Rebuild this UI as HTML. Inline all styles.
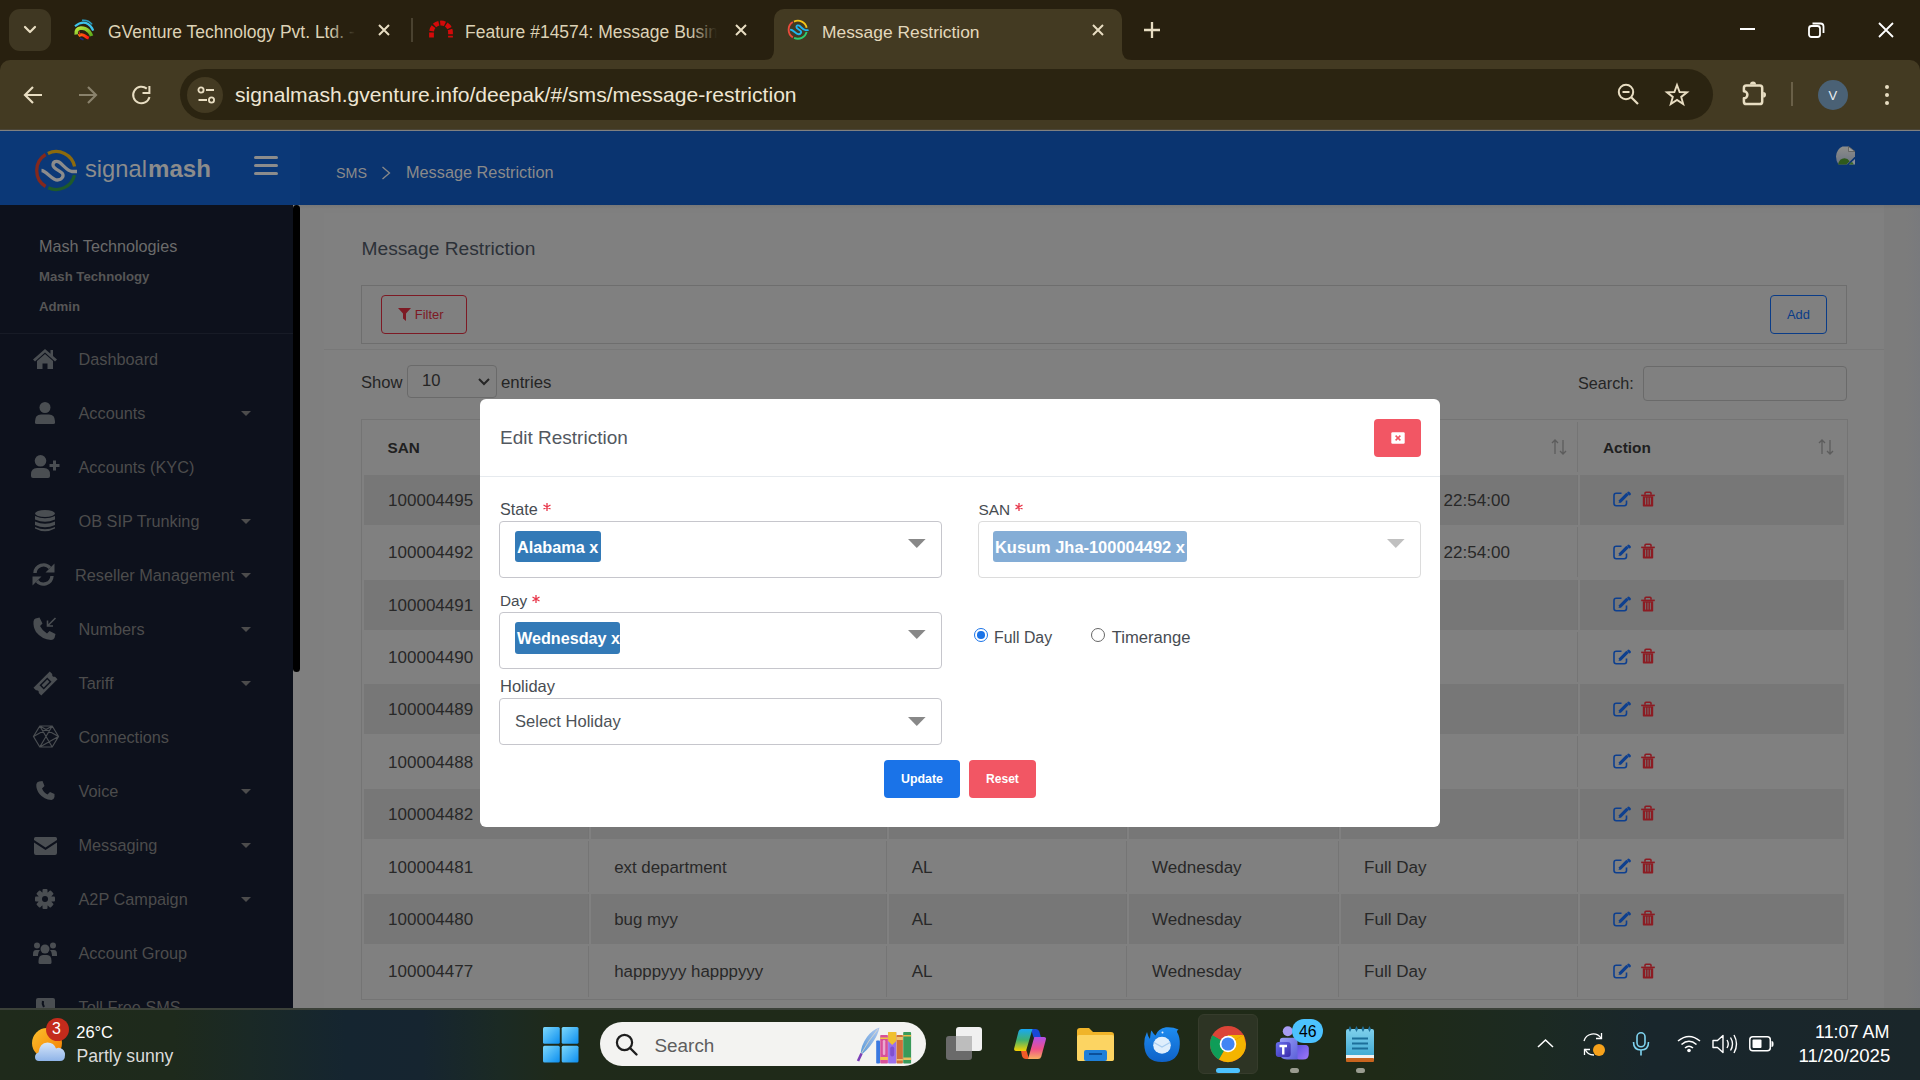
<!DOCTYPE html>
<html><head><meta charset="utf-8">
<style>
*{margin:0;padding:0;box-sizing:border-box}
html,body{width:1920px;height:1080px;overflow:hidden;background:#808080;font-family:"Liberation Sans",sans-serif}
.a{position:absolute}
.t{position:absolute;white-space:nowrap;line-height:1}
svg{position:absolute;overflow:visible}
</style></head><body>
<div class="a" style="left:0px;top:0px;width:1920px;height:72px;background:#28200f;"></div>
<div class="a" style="left:9px;top:9px;width:42px;height:42px;background:#3f3722;border-radius:11px"></div>
<svg style="left:24px;top:26px;" width="12" height="8" viewBox="0 0 12 8"><path d="M1 1 L6 6 L11 1" fill="none" stroke="#e8ddc2" stroke-width="2.2" stroke-linecap="round" stroke-linejoin="round"/></svg>
<svg style="left:70px;top:14px;" width="30" height="30" viewBox="0 0 30 30"><defs><linearGradient id="gvr" x1="0" y1="0" x2="1" y2="0"><stop offset="0" stop-color="#ff7a10"/><stop offset="1" stop-color="#ff1010"/></linearGradient>
<linearGradient id="gvg" x1="0" y1="0" x2="1" y2="1"><stop offset="0" stop-color="#b8e640"/><stop offset="1" stop-color="#5aa818"/></linearGradient></defs>
<path d="M12 6.3 Q18 5.5 22.2 10.4" stroke="#2a9cc0" stroke-width="1.4" fill="none"/>
<path d="M5 12.3 Q12 6.5 18 10 Q21.5 12 23.2 16.6" stroke="#3ec4ec" stroke-width="2.1" fill="none"/>
<path d="M6.2 20.5 Q5.5 14.5 11 14 Q16 14 19 17.5 Q21 20 21.5 22" stroke="url(#gvg)" stroke-width="3.6" fill="none"/>
<path d="M8.5 21.8 Q12 19.5 15 22 Q17 23.5 18.8 24.2" stroke="url(#gvr)" stroke-width="3" fill="none"/>
<path d="M10 24 Q12 25 13.5 25.8" stroke="#1a2a80" stroke-width="1.5" fill="none"/>
<path d="M9 17.5 L10 21" stroke="#c03020" stroke-width="1.2"/></svg>
<div class="t" style="left:108px;top:24.00px;font-size:17.5px;color:#ddd2b6;font-weight:normal;letter-spacing:0px">GVenture Technology Pvt. Ltd. -</div>
<div class="a" style="left:330px;top:16px;width:30px;height:28px;background:linear-gradient(90deg,rgba(40,32,15,0),#28200f 85%);"></div>
<svg style="left:378px;top:24px;" width="12" height="12" viewBox="0 0 12 12"><path d="M1 1L11 11M11 1L1 11" stroke="#e8ddc2" stroke-width="2"/></svg>
<div class="a" style="left:411px;top:18px;width:2px;height:24px;background:#4a4230;"></div>
<svg style="left:420px;top:10px;" width="40" height="40" viewBox="0 0 40 40"><path d="M11.5 27.4 V22.5 A9.5 9.5 0 0 1 30.5 22.5 V27.4" fill="none" stroke="#d40a0a" stroke-width="4.8" stroke-dasharray="4.9 1.4"/></svg>
<div class="t" style="left:465px;top:24.00px;font-size:17.5px;color:#ddd2b6;font-weight:normal;">Feature #14574: Message Busin</div>
<div class="a" style="left:690px;top:16px;width:30px;height:28px;background:linear-gradient(90deg,rgba(40,32,15,0),#28200f 90%);"></div>
<svg style="left:735px;top:24px;" width="12" height="12" viewBox="0 0 12 12"><path d="M1 1L11 11M11 1L1 11" stroke="#e8ddc2" stroke-width="2"/></svg>
<div class="a" style="left:774px;top:9px;width:348px;height:52px;background:#433a22;border-radius:10px 10px 0 0"></div>
<svg style="left:764px;top:50px" width="10" height="10"><path d="M0 10 Q10 10 10 0 L10 10Z" fill="#433a22"/></svg>
<svg style="left:1122px;top:50px" width="10" height="10"><path d="M10 10 Q0 10 0 0 L0 10Z" fill="#433a22"/></svg>
<svg style="left:0;top:0" width="1" height="1"><g transform="translate(785.07,17.54) scale(0.477)">
<path d="M18.6 8.4 A18.85 18.85 0 0 1 45.3 21.5" stroke="#f5c518" stroke-width="3.9" fill="none"/>
<path d="M45.2 30.1 A18.85 18.85 0 0 1 18.9 42.7" stroke="#2ecc71" stroke-width="3.9" fill="none"/>
<path d="M16.3 41.5 A18.85 18.85 0 0 1 16.3 9.5" stroke="#ea4b3c" stroke-width="3.9" fill="none"/>
<path d="M12.2 25.5 C16.7 25.5 22.7 35 28.2 35 C32.7 35 34.7 31 33.2 28.5 C31.7 26 23.7 24 23.7 20 C23.7 16.5 27.2 15.5 29.7 17 C33.7 19.5 37.7 26 42.7 26.5 L47.7 26.5" stroke="#1eb6f0" stroke-width="3.9" fill="none" stroke-linecap="round" stroke-linejoin="round"/></g></svg>
<div class="t" style="left:822px;top:24.00px;font-size:17.4px;color:#e3d8bc;font-weight:normal;">Message Restriction</div>
<svg style="left:1092px;top:24px;" width="12" height="12" viewBox="0 0 12 12"><path d="M1 1L11 11M11 1L1 11" stroke="#e8ddc2" stroke-width="2"/></svg>
<svg style="left:1144px;top:22px;" width="16" height="16" viewBox="0 0 16 16"><path d="M8 0V16M0 8H16" stroke="#e8ddc2" stroke-width="2.3"/></svg>
<div class="a" style="left:1740px;top:28px;width:15px;height:2px;background:#ffffff;"></div>
<svg style="left:1808px;top:22px;" width="17" height="16" viewBox="0 0 17 16"><rect x="1" y="4" width="11" height="11" rx="2.5" fill="none" stroke="#fff" stroke-width="1.8"/><path d="M4.5 1.5 H12.5 Q15.5 1.5 15.5 4.5 V11" fill="none" stroke="#fff" stroke-width="1.8"/></svg>
<svg style="left:1878px;top:22px;" width="16" height="16" viewBox="0 0 16 16"><path d="M1 1L15 15M15 1L1 15" stroke="#fff" stroke-width="1.8"/></svg>
<div class="a" style="left:0px;top:60px;width:1920px;height:70px;background:#433a22;border-radius:10px 10px 0 0"></div>
<div class="a" style="left:0px;top:129px;width:1920px;height:1px;background:#4a4436;"></div>
<svg style="left:24px;top:86px;" width="19" height="18" viewBox="0 0 19 18"><path d="M9 1 L1 9 L9 17 M1 9 H18" fill="none" stroke="#e8ddc2" stroke-width="2.2" stroke-linejoin="miter"/></svg>
<svg style="left:78px;top:86px;" width="19" height="18" viewBox="0 0 19 18"><path d="M10 1 L18 9 L10 17 M18 9 H1" fill="none" stroke="#8a826c" stroke-width="2.2"/></svg>
<svg style="left:131px;top:85px;" width="20" height="20" viewBox="0 0 20 20"><path d="M15.8 3.64 A8.3 8.3 0 1 0 18.5 12.1" fill="none" stroke="#e8ddc2" stroke-width="2"/><path d="M11.5 8 H18.4 V1" fill="none" stroke="#e8ddc2" stroke-width="2"/></svg>
<div class="a" style="left:180px;top:69px;width:1533px;height:51px;background:#2b2411;border-radius:26px"></div>
<div class="a" style="left:187px;top:77px;width:36px;height:36px;background:#433a22;border-radius:50%"></div>
<svg style="left:196.8px;top:86px;" width="20" height="18" viewBox="0 0 20 18"><circle cx="4" cy="4" r="2.6" fill="none" stroke="#e8ddc2" stroke-width="1.8"/><path d="M9 4H17" stroke="#e8ddc2" stroke-width="2"/><circle cx="14.5" cy="14" r="2.6" fill="none" stroke="#e8ddc2" stroke-width="1.8"/><path d="M1.5 14H10" stroke="#e8ddc2" stroke-width="2"/></svg>
<div class="t" style="left:235px;top:84.00px;font-size:21.1px;color:#eee6d4;font-weight:normal;">signalmash.gventure.info/deepak/#/sms/message-restriction</div>
<svg style="left:1617px;top:83px;" width="24" height="24" viewBox="0 0 24 24"><circle cx="9" cy="9" r="7.2" fill="none" stroke="#e8ddc2" stroke-width="2"/><path d="M5.5 9H12.5" stroke="#e8ddc2" stroke-width="2"/><path d="M14.2 14.2 L21 21" stroke="#e8ddc2" stroke-width="2.2"/></svg>
<svg style="left:1665px;top:83px;" width="24" height="24" viewBox="0 0 24 24"><path d="M12 2 L14.6 9 L22 9.3 L16.2 13.9 L18.2 21 L12 16.9 L5.8 21 L7.8 13.9 L2 9.3 L9.4 9 Z" fill="none" stroke="#e8ddc2" stroke-width="1.9" stroke-linejoin="miter"/></svg>
<svg style="left:1741px;top:81px;" width="27" height="26" viewBox="0 0 27 26"><path d="M2.9 7 Q2.9 4.6 5.3 4.6 H18.8 Q21.2 4.6 21.2 7 V20.7 Q21.2 23.1 18.8 23.1 H5.3 Q2.9 23.1 2.9 20.7 V17.3 A3.5 3.5 0 0 0 2.9 10.3 Z" fill="none" stroke="#e8ddc2" stroke-width="2.5" stroke-linejoin="round"/><path d="M9 3.6 A3 3 0 0 1 15 3.6 Z" fill="#e8ddc2"/><path d="M22.2 11 A2.8 2.8 0 0 1 22.2 16.6 Z" fill="#e8ddc2"/></svg>
<div class="a" style="left:1791px;top:82px;width:2px;height:24px;background:#6a6048;"></div>
<div class="a" style="left:1818px;top:80px;width:30px;height:30px;background:#4a6175;border-radius:50%"></div>
<div class="t" style="left:1828.5px;top:89.00px;font-size:13px;color:#e8eef2;font-weight:normal;">V</div>
<div class="a" style="left:1885px;top:84.8px;width:4.4px;height:4.4px;background:#e8ddc2;border-radius:50%"></div>
<div class="a" style="left:1885px;top:92.8px;width:4.4px;height:4.4px;background:#e8ddc2;border-radius:50%"></div>
<div class="a" style="left:1885px;top:100.8px;width:4.4px;height:4.4px;background:#e8ddc2;border-radius:50%"></div>
<div class="a" style="left:0px;top:131px;width:1920px;height:74px;background:#0a3470;"></div>
<div class="a" style="left:0px;top:131px;width:300px;height:74px;background:#0b3877;"></div>
<svg style="left:30px;top:145px;" width="60" height="52" viewBox="0 0 60 52"><path d="M17.9 8.4 A18.85 18.85 0 0 1 44.6 21.5" stroke="#8c6a0e" stroke-width="3.3" fill="none"/>
<path d="M44.5 30.1 A18.85 18.85 0 0 1 18.2 42.7" stroke="#1e5a2a" stroke-width="3.3" fill="none"/>
<path d="M15.6 41.5 A18.85 18.85 0 0 1 15.6 9.5" stroke="#84281c" stroke-width="3.3" fill="none"/>
<path d="M11.5 25.5 C16 25.5 22 35 27.5 35 C32 35 34 31 32.5 28.5 C31 26 23 24 23 20 C23 16.5 26.5 15.5 29 17 C33 19.5 37 26 42 26.5 L47 26.5" stroke="#8c8c8c" stroke-width="3.3" fill="none" stroke-linecap="butt" stroke-linejoin="round"/></svg>
<div class="t" style="left:85px;top:158.00px;font-size:23.7px;color:#8c8c8c;font-weight:normal;">signal</div>
<div class="t" style="left:148px;top:157.00px;font-size:24.1px;color:#8c8c8c;font-weight:bold;">mash</div>
<div class="a" style="left:254px;top:156.1px;width:24px;height:3px;background:#8c8c8c;border-radius:1.5px"></div>
<div class="a" style="left:254px;top:164.1px;width:24px;height:3px;background:#8c8c8c;border-radius:1.5px"></div>
<div class="a" style="left:254px;top:172.1px;width:24px;height:3px;background:#8c8c8c;border-radius:1.5px"></div>
<div class="t" style="left:336px;top:166.00px;font-size:14.3px;color:#8a8a8a;font-weight:normal;">SMS</div>
<svg style="left:381px;top:166px;" width="10" height="14" viewBox="0 0 10 14"><path d="M1.5 1 L8.5 7 L1.5 13" fill="none" stroke="#8a8a8a" stroke-width="1.3"/></svg>
<div class="t" style="left:406px;top:164.00px;font-size:16.3px;color:#8a8a8a;font-weight:normal;">Message Restriction</div>
<svg style="left:1836px;top:146px;" width="20" height="20" viewBox="0 0 20 20"><defs><linearGradient id="bi" x1="0" y1="0" x2="0" y2="1"><stop offset="0" stop-color="#8e8e8a"/><stop offset="1" stop-color="#6a7282"/></linearGradient></defs>
<path d="M6.5 0.5 H12.5 L19 5.5 V10.5 L11 18.5 H2.5 Q0 15 0 10.5 Q0.5 3 6.5 0.5Z" fill="url(#bi)"/>
<path d="M12.5 0.5 V5.5 H19Z" fill="#9c9c9a" stroke="#5c5c58" stroke-width="0.8"/>
<path d="M2 18.5 Q3.5 12.3 8.5 12.3 Q11.8 12.3 13.6 15.3 L10.4 18.5Z" fill="#2f5a1c"/>
<path d="M13 18.5 L19 13 V18.5Z" fill="#8a8f98"/><path d="M13 18.5 L15.8 15.8 Q17.2 17 17.8 18.5Z" fill="#3a6a28"/></svg>
<div class="a" style="left:0px;top:205px;width:293px;height:803px;background:#0d111c;"></div>
<div class="a" style="left:293px;top:205px;width:7px;height:803px;background:#808080;"></div>
<div class="a" style="left:293px;top:205px;width:7px;height:467px;background:#000;border-radius:3.5px"></div>
<div class="t" style="left:39px;top:238.00px;font-size:16.2px;color:#6b6b6b;font-weight:normal;">Mash Technologies</div>
<div class="t" style="left:39px;top:270.00px;font-size:13.2px;color:#565656;font-weight:bold;">Mash Technology</div>
<div class="t" style="left:39px;top:300.00px;font-size:13.2px;color:#565656;font-weight:bold;">Admin</div>
<div class="a" style="left:0px;top:333px;width:293px;height:1px;background:#171b26;"></div>
<div class="t" style="left:78.5px;top:351.00px;font-size:16.3px;color:#4c4c4c;font-weight:normal;">Dashboard</div>
<div class="t" style="left:78.5px;top:405.00px;font-size:16.3px;color:#4c4c4c;font-weight:normal;">Accounts</div>
<svg style="left:241px;top:411px;" width="10" height="5" viewBox="0 0 10 5"><path d="M0 0 H10 L5 5Z" fill="#4c4c4c"/></svg>
<div class="t" style="left:78.5px;top:459.00px;font-size:16.3px;color:#4c4c4c;font-weight:normal;">Accounts (KYC)</div>
<div class="t" style="left:78.5px;top:513.00px;font-size:16.3px;color:#4c4c4c;font-weight:normal;">OB SIP Trunking</div>
<svg style="left:241px;top:519px;" width="10" height="5" viewBox="0 0 10 5"><path d="M0 0 H10 L5 5Z" fill="#4c4c4c"/></svg>
<div class="t" style="left:75px;top:567.00px;font-size:16.3px;color:#4c4c4c;font-weight:normal;">Reseller Management</div>
<svg style="left:241px;top:573px;" width="10" height="5" viewBox="0 0 10 5"><path d="M0 0 H10 L5 5Z" fill="#4c4c4c"/></svg>
<div class="t" style="left:78.5px;top:621.00px;font-size:16.3px;color:#4c4c4c;font-weight:normal;">Numbers</div>
<svg style="left:241px;top:627px;" width="10" height="5" viewBox="0 0 10 5"><path d="M0 0 H10 L5 5Z" fill="#4c4c4c"/></svg>
<div class="t" style="left:78.5px;top:675.00px;font-size:16.3px;color:#4c4c4c;font-weight:normal;">Tariff</div>
<svg style="left:241px;top:681px;" width="10" height="5" viewBox="0 0 10 5"><path d="M0 0 H10 L5 5Z" fill="#4c4c4c"/></svg>
<div class="t" style="left:78.5px;top:729.00px;font-size:16.3px;color:#4c4c4c;font-weight:normal;">Connections</div>
<div class="t" style="left:78.5px;top:783.00px;font-size:16.3px;color:#4c4c4c;font-weight:normal;">Voice</div>
<svg style="left:241px;top:789px;" width="10" height="5" viewBox="0 0 10 5"><path d="M0 0 H10 L5 5Z" fill="#4c4c4c"/></svg>
<div class="t" style="left:78.5px;top:837.00px;font-size:16.3px;color:#4c4c4c;font-weight:normal;">Messaging</div>
<svg style="left:241px;top:843px;" width="10" height="5" viewBox="0 0 10 5"><path d="M0 0 H10 L5 5Z" fill="#4c4c4c"/></svg>
<div class="t" style="left:78.5px;top:891.00px;font-size:16.3px;color:#4c4c4c;font-weight:normal;">A2P Campaign</div>
<svg style="left:241px;top:897px;" width="10" height="5" viewBox="0 0 10 5"><path d="M0 0 H10 L5 5Z" fill="#4c4c4c"/></svg>
<div class="t" style="left:78.5px;top:945.00px;font-size:16.3px;color:#4c4c4c;font-weight:normal;">Account Group</div>
<div class="t" style="left:78.5px;top:999.00px;font-size:16.3px;color:#4c4c4c;font-weight:normal;">Toll Free SMS</div>
<svg style="left:32px;top:348px;" width="26" height="21" viewBox="0 0 26 21"><path d="M13 1 L1 11.5 L3 13.5 L13 4.5 L23 13.5 L25 11.5 L21 8 V2 H18.5 V5.8 Z" fill="#4a4e52"/><path d="M5 13 L13 6 L21 13 V21 H15.5 V15.5 H10.5 V21 H5Z" fill="#4a4e52"/></svg>
<svg style="left:35px;top:402px;" width="20" height="22" viewBox="0 0 20 22"><circle cx="10" cy="5.5" r="5.5" fill="#4a4e52"/><path d="M0 19.5 Q0 12.5 6 12.5 H14 Q20 12.5 20 19.5 V20.5 Q20 22 18.5 22 H1.5 Q0 22 0 20.5Z" fill="#4a4e52"/></svg>
<svg style="left:31px;top:455px;" width="29" height="23" viewBox="0 0 29 23"><circle cx="9.5" cy="5.8" r="5.8" fill="#4a4e52"/><path d="M0 19.5 Q0 13 6 13 H13 Q19 13 19 19.5 V21 Q19 23 17 23 H2 Q0 23 0 21Z" fill="#4a4e52"/><path d="M23.5 5.5 V15.5 M18.5 10.5 H28.5" stroke="#4a4e52" stroke-width="3"/></svg>
<svg style="left:35px;top:510px;" width="20" height="22" viewBox="0 0 20 22"><ellipse cx="10" cy="3.5" rx="10" ry="3.5" fill="#4a4e52"/><path d="M0 6 Q10 10.5 20 6 V9.5 Q10 14 0 9.5Z M0 11.5 Q10 16 20 11.5 V15 Q10 19.5 0 15Z M0 17 Q10 21.5 20 17 V18.5 Q10 24 0 18.5Z" fill="#4a4e52"/></svg>
<svg style="left:32px;top:563px;" width="23" height="23" viewBox="0 0 23 23"><path d="M3 10 A8.5 8.5 0 0 1 18 5" fill="none" stroke="#4a4e52" stroke-width="3.4"/><path d="M22.5 0.5 V9.5 H13.5Z" fill="#4a4e52"/><path d="M20 13 A8.5 8.5 0 0 1 5 18" fill="none" stroke="#4a4e52" stroke-width="3.4"/><path d="M0.5 22.5 V13.5 H9.5Z" fill="#4a4e52"/></svg>
<svg style="left:33px;top:617px;" width="24" height="23" viewBox="0 0 24 23"><path d="M2.5 1.5 L6.5 0.5 L9.5 6.5 L7 9 Q9.5 14 14 16.5 L16.5 14 L22.5 17 L21.5 21 Q20.5 23 18 23 Q9 22.5 3 15 Q0 10 0.5 4.5 Q0.8 2 2.5 1.5Z" fill="#4a4e52"/><path d="M22.5 1 L14.5 9 M14.5 3.5 V9 H20" fill="none" stroke="#4a4e52" stroke-width="1.6"/></svg>
<svg style="left:34px;top:672px;" width="23" height="23" viewBox="0 0 23 23"><g transform="rotate(-45 11.5 11.5)"><path d="M0 6 H23 V9.5 Q20.5 11.5 23 13.5 V17 H0 V13.5 Q2.5 11.5 0 9.5Z" fill="#4a4e52"/><rect x="6" y="8.5" width="11" height="6" fill="#0d111c"/><rect x="7.5" y="10" width="8" height="3" fill="#4a4e52"/></g></svg>
<svg style="left:32.5px;top:725px;" width="26" height="23" viewBox="0 0 26 23"><path d="M6.8 1 H19.2 L25.5 11.5 L19.2 22 H6.8 L0.5 11.5Z M6.8 1 L19.2 22 M19.2 1 L6.8 22 M0.5 11.5 L19.2 1 M25.5 11.5 L6.8 22 M6.8 1 L25.5 11.5" fill="none" stroke="#4a4e52" stroke-width="1.2"/></svg>
<svg style="left:36px;top:781px;" width="19" height="19" viewBox="0 0 19 19"><path d="M3 0.5 L6.5 0 L8.5 5 L6 7.5 Q8 12 11.5 13.5 L14 11 L18.5 13 L18.5 16 Q18 18.5 15.5 19 Q8 18.5 3.5 13 Q0 8.5 0.3 3.5 Q0.5 1 3 0.5Z" fill="#4a4e52"/></svg>
<svg style="left:34px;top:837px;" width="23" height="18" viewBox="0 0 23 18"><path d="M1.5 0 H21.5 Q23 0 23 1.5 V3 L11.5 10.5 L0 3 V1.5 Q0 0 1.5 0Z" fill="#4a4e52"/><path d="M0 5.5 L11.5 13 L23 5.5 V16 Q23 18 21 18 H2 Q0 18 0 16Z" fill="#4a4e52"/></svg>
<svg style="left:35px;top:889px;" width="20" height="20" viewBox="0 0 20 20"><g fill="#4a4e52"><circle cx="10" cy="10" r="7"/><rect x="7.5" y="0" width="5" height="20" rx="1"/><rect x="0" y="7.5" width="20" height="5" rx="1"/><rect x="7.5" y="0" width="5" height="20" rx="1" transform="rotate(45 10 10)"/><rect x="7.5" y="0" width="5" height="20" rx="1" transform="rotate(-45 10 10)"/></g><circle cx="10" cy="10" r="3" fill="#0d111c"/></svg>
<svg style="left:33px;top:942px;" width="24" height="22" viewBox="0 0 24 22"><g fill="#4a4e52"><circle cx="4" cy="3.5" r="3"/><circle cx="20" cy="3.5" r="3"/><circle cx="12" cy="7" r="4.5"/><path d="M0 12 Q0 8 3 8 H7 Q5 10 5 13 V14 H0Z"/><path d="M24 12 Q24 8 21 8 H17 Q19 10 19 13 V14 H24Z"/><path d="M5.5 19 Q5.5 13 10 13 H14 Q18.5 13 18.5 19 V20.5 Q18.5 22 17 22 H7 Q5.5 22 5.5 20.5Z"/></g></svg>
<svg style="left:36px;top:998px;" width="19" height="12" viewBox="0 0 19 12"><rect x="0" y="0" width="19" height="14" rx="2" fill="#4a4e52"/><path d="M7 3 Q6 6 8 9" stroke="#0d111c" stroke-width="2.2" fill="none"/></svg>
<div class="a" style="left:300px;top:205px;width:1620px;height:803px;background:#7f7f7f;"></div>
<div class="a" style="left:324px;top:213px;width:1560px;height:795px;background:#808080;"></div>
<div class="a" style="left:1884px;top:205px;width:36px;height:803px;background:#7c7c7c;"></div>
<div class="a" style="left:1906px;top:205px;width:14px;height:803px;background:linear-gradient(90deg,#7c7c7c,#797a7d);"></div>
<div class="a" style="left:300px;top:205px;width:1620px;height:4px;background:linear-gradient(180deg,rgba(0,0,0,0.06),rgba(0,0,0,0));"></div>
<div class="t" style="left:361.5px;top:239.00px;font-size:19.2px;color:#2c3138;font-weight:normal;">Message Restriction</div>
<div class="a" style="left:361px;top:285px;width:1486px;height:59px;background:transparent;border:1px solid #6e6e6e"></div>
<div class="a" style="left:381px;top:295px;width:86px;height:39px;background:transparent;border:1.5px solid #7d1a24;border-radius:4px"></div>
<svg style="left:397.8px;top:307.7px;" width="13" height="13" viewBox="0 0 13 13"><path d="M0 0 H13 L8 5.5 V13 L5 10.5 V5.5Z" fill="#7d1a24"/></svg>
<div class="t" style="left:414.8px;top:309.00px;font-size:12.9px;color:#7d1a24;font-weight:normal;">Filter</div>
<div class="a" style="left:1770px;top:295px;width:57px;height:39px;background:transparent;border:1.5px solid #0a3c88;border-radius:4px"></div>
<div class="t" style="left:1787px;top:309.00px;font-size:12.9px;color:#0a3c88;font-weight:normal;">Add</div>
<div class="a" style="left:324px;top:349px;width:1560px;height:1px;background:#787878;"></div>
<div class="t" style="left:361px;top:375.00px;font-size:16.6px;color:#252525;font-weight:normal;">Show</div>
<div class="a" style="left:407px;top:365px;width:90px;height:33px;background:transparent;border:1px solid #6a6a6a;border-radius:4px"></div>
<div class="t" style="left:422px;top:373.00px;font-size:16.6px;color:#252525;font-weight:normal;">10</div>
<svg style="left:478px;top:378px;" width="12" height="8" viewBox="0 0 12 8"><path d="M1 1 L6 6 L11 1" fill="none" stroke="#252525" stroke-width="2"/></svg>
<div class="t" style="left:501px;top:375.00px;font-size:16.8px;color:#252525;font-weight:normal;">entries</div>
<div class="t" style="left:1578px;top:375.00px;font-size:16.2px;color:#252525;font-weight:normal;">Search:</div>
<div class="a" style="left:1643px;top:366px;width:204px;height:35px;background:transparent;border:1px solid #6a6a6a;border-radius:4px"></div>
<div class="a" style="left:361px;top:419px;width:1487px;height:581px;background:transparent;border:1px solid #747474"></div>
<div class="a" style="left:588px;top:422px;width:1px;height:50px;background:#757575;"></div>
<div class="a" style="left:886px;top:422px;width:1px;height:50px;background:#757575;"></div>
<div class="a" style="left:1126px;top:422px;width:1px;height:50px;background:#757575;"></div>
<div class="a" style="left:1338px;top:422px;width:1px;height:50px;background:#757575;"></div>
<div class="a" style="left:1577px;top:422px;width:1px;height:50px;background:#757575;"></div>
<div class="a" style="left:364px;top:474.7px;width:224px;height:50px;background:#777777;"></div>
<div class="a" style="left:591px;top:474.7px;width:295px;height:50px;background:#777777;"></div>
<div class="a" style="left:889px;top:474.7px;width:237px;height:50px;background:#777777;"></div>
<div class="a" style="left:1129px;top:474.7px;width:209px;height:50px;background:#777777;"></div>
<div class="a" style="left:1341px;top:474.7px;width:236px;height:50px;background:#777777;"></div>
<div class="a" style="left:1580px;top:474.7px;width:264px;height:50px;background:#777777;"></div>
<div class="a" style="left:588px;top:474.7px;width:1px;height:50px;background:#747474;"></div>
<div class="a" style="left:886px;top:474.7px;width:1px;height:50px;background:#747474;"></div>
<div class="a" style="left:1126px;top:474.7px;width:1px;height:50px;background:#747474;"></div>
<div class="a" style="left:1338px;top:474.7px;width:1px;height:50px;background:#747474;"></div>
<div class="a" style="left:1577px;top:474.7px;width:1px;height:50px;background:#747474;"></div>
<div class="a" style="left:588px;top:526.7px;width:1px;height:50.8px;background:#757575;"></div>
<div class="a" style="left:886px;top:526.7px;width:1px;height:50.8px;background:#757575;"></div>
<div class="a" style="left:1126px;top:526.7px;width:1px;height:50.8px;background:#757575;"></div>
<div class="a" style="left:1338px;top:526.7px;width:1px;height:50.8px;background:#757575;"></div>
<div class="a" style="left:1577px;top:526.7px;width:1px;height:50.8px;background:#757575;"></div>
<div class="a" style="left:364px;top:579.5px;width:224px;height:50px;background:#777777;"></div>
<div class="a" style="left:591px;top:579.5px;width:295px;height:50px;background:#777777;"></div>
<div class="a" style="left:889px;top:579.5px;width:237px;height:50px;background:#777777;"></div>
<div class="a" style="left:1129px;top:579.5px;width:209px;height:50px;background:#777777;"></div>
<div class="a" style="left:1341px;top:579.5px;width:236px;height:50px;background:#777777;"></div>
<div class="a" style="left:1580px;top:579.5px;width:264px;height:50px;background:#777777;"></div>
<div class="a" style="left:588px;top:579.5px;width:1px;height:50px;background:#747474;"></div>
<div class="a" style="left:886px;top:579.5px;width:1px;height:50px;background:#747474;"></div>
<div class="a" style="left:1126px;top:579.5px;width:1px;height:50px;background:#747474;"></div>
<div class="a" style="left:1338px;top:579.5px;width:1px;height:50px;background:#747474;"></div>
<div class="a" style="left:1577px;top:579.5px;width:1px;height:50px;background:#747474;"></div>
<div class="a" style="left:588px;top:631.5px;width:1px;height:50.8px;background:#757575;"></div>
<div class="a" style="left:886px;top:631.5px;width:1px;height:50.8px;background:#757575;"></div>
<div class="a" style="left:1126px;top:631.5px;width:1px;height:50.8px;background:#757575;"></div>
<div class="a" style="left:1338px;top:631.5px;width:1px;height:50.8px;background:#757575;"></div>
<div class="a" style="left:1577px;top:631.5px;width:1px;height:50.8px;background:#757575;"></div>
<div class="a" style="left:364px;top:684.3px;width:224px;height:50px;background:#777777;"></div>
<div class="a" style="left:591px;top:684.3px;width:295px;height:50px;background:#777777;"></div>
<div class="a" style="left:889px;top:684.3px;width:237px;height:50px;background:#777777;"></div>
<div class="a" style="left:1129px;top:684.3px;width:209px;height:50px;background:#777777;"></div>
<div class="a" style="left:1341px;top:684.3px;width:236px;height:50px;background:#777777;"></div>
<div class="a" style="left:1580px;top:684.3px;width:264px;height:50px;background:#777777;"></div>
<div class="a" style="left:588px;top:684.3px;width:1px;height:50px;background:#747474;"></div>
<div class="a" style="left:886px;top:684.3px;width:1px;height:50px;background:#747474;"></div>
<div class="a" style="left:1126px;top:684.3px;width:1px;height:50px;background:#747474;"></div>
<div class="a" style="left:1338px;top:684.3px;width:1px;height:50px;background:#747474;"></div>
<div class="a" style="left:1577px;top:684.3px;width:1px;height:50px;background:#747474;"></div>
<div class="a" style="left:588px;top:736.3px;width:1px;height:50.8px;background:#757575;"></div>
<div class="a" style="left:886px;top:736.3px;width:1px;height:50.8px;background:#757575;"></div>
<div class="a" style="left:1126px;top:736.3px;width:1px;height:50.8px;background:#757575;"></div>
<div class="a" style="left:1338px;top:736.3px;width:1px;height:50.8px;background:#757575;"></div>
<div class="a" style="left:1577px;top:736.3px;width:1px;height:50.8px;background:#757575;"></div>
<div class="a" style="left:364px;top:789.1px;width:224px;height:50px;background:#777777;"></div>
<div class="a" style="left:591px;top:789.1px;width:295px;height:50px;background:#777777;"></div>
<div class="a" style="left:889px;top:789.1px;width:237px;height:50px;background:#777777;"></div>
<div class="a" style="left:1129px;top:789.1px;width:209px;height:50px;background:#777777;"></div>
<div class="a" style="left:1341px;top:789.1px;width:236px;height:50px;background:#777777;"></div>
<div class="a" style="left:1580px;top:789.1px;width:264px;height:50px;background:#777777;"></div>
<div class="a" style="left:588px;top:789.1px;width:1px;height:50px;background:#747474;"></div>
<div class="a" style="left:886px;top:789.1px;width:1px;height:50px;background:#747474;"></div>
<div class="a" style="left:1126px;top:789.1px;width:1px;height:50px;background:#747474;"></div>
<div class="a" style="left:1338px;top:789.1px;width:1px;height:50px;background:#747474;"></div>
<div class="a" style="left:1577px;top:789.1px;width:1px;height:50px;background:#747474;"></div>
<div class="a" style="left:588px;top:841.1px;width:1px;height:50.8px;background:#757575;"></div>
<div class="a" style="left:886px;top:841.1px;width:1px;height:50.8px;background:#757575;"></div>
<div class="a" style="left:1126px;top:841.1px;width:1px;height:50.8px;background:#757575;"></div>
<div class="a" style="left:1338px;top:841.1px;width:1px;height:50.8px;background:#757575;"></div>
<div class="a" style="left:1577px;top:841.1px;width:1px;height:50.8px;background:#757575;"></div>
<div class="a" style="left:364px;top:893.9px;width:224px;height:50px;background:#777777;"></div>
<div class="a" style="left:591px;top:893.9px;width:295px;height:50px;background:#777777;"></div>
<div class="a" style="left:889px;top:893.9px;width:237px;height:50px;background:#777777;"></div>
<div class="a" style="left:1129px;top:893.9px;width:209px;height:50px;background:#777777;"></div>
<div class="a" style="left:1341px;top:893.9px;width:236px;height:50px;background:#777777;"></div>
<div class="a" style="left:1580px;top:893.9px;width:264px;height:50px;background:#777777;"></div>
<div class="a" style="left:588px;top:893.9px;width:1px;height:50px;background:#747474;"></div>
<div class="a" style="left:886px;top:893.9px;width:1px;height:50px;background:#747474;"></div>
<div class="a" style="left:1126px;top:893.9px;width:1px;height:50px;background:#747474;"></div>
<div class="a" style="left:1338px;top:893.9px;width:1px;height:50px;background:#747474;"></div>
<div class="a" style="left:1577px;top:893.9px;width:1px;height:50px;background:#747474;"></div>
<div class="a" style="left:588px;top:945.9px;width:1px;height:51.1px;background:#757575;"></div>
<div class="a" style="left:886px;top:945.9px;width:1px;height:51.1px;background:#757575;"></div>
<div class="a" style="left:1126px;top:945.9px;width:1px;height:51.1px;background:#757575;"></div>
<div class="a" style="left:1338px;top:945.9px;width:1px;height:51.1px;background:#757575;"></div>
<div class="a" style="left:1577px;top:945.9px;width:1px;height:51.1px;background:#757575;"></div>
<div class="t" style="left:387.5px;top:440.00px;font-size:15.3px;color:#202020;font-weight:bold;">SAN</div>
<div class="t" style="left:1603px;top:440.00px;font-size:15.4px;color:#202020;font-weight:bold;">Action</div>
<svg style="left:1551px;top:439px;" width="17" height="16" viewBox="0 0 17 16"><path d="M4 1 V15 M1 4 L4 1 L7 4 M12 1 V15 M9 12 L12 15 L15 12" fill="none" stroke="#5c5c5c" stroke-width="1.3"/></svg>
<svg style="left:1818px;top:439px;" width="17" height="16" viewBox="0 0 17 16"><path d="M4 1 V15 M1 4 L4 1 L7 4 M12 1 V15 M9 12 L12 15 L15 12" fill="none" stroke="#5c5c5c" stroke-width="1.3"/></svg>
<div class="t" style="left:388px;top:492.00px;font-size:17.05px;color:#282828;font-weight:normal;">100004495</div>
<svg style="left:1613px;top:492.3px;" width="18" height="15" viewBox="0 0 18 15"><path d="M8.5 1.2 H3.2 Q1 1.2 1 3.4 V11.6 Q1 13.8 3.2 13.8 H11.3 Q13.5 13.8 13.5 11.6 V8.5" fill="none" stroke="#0d3f8f" stroke-width="1.6"/><path d="M6.6 9.8 L14.5 1.9" stroke="#0d3f8f" stroke-width="3.2"/><path d="M15.5 0.9 L16.6 2" stroke="#0d3f8f" stroke-width="2.6" stroke-linecap="round"/><path d="M5.5 11 L6.2 9 L7.6 10.4Z" fill="#0d3f8f"/></svg>
<svg style="left:1641px;top:492.0px;" width="14" height="15" viewBox="0 0 14 15"><path d="M4 2.8 V1.2 Q4 0.3 5 0.3 H9 Q10 0.3 10 1.2 V2.8" fill="none" stroke="#8c1b22" stroke-width="1.6"/><rect x="0.2" y="2.6" width="13.6" height="1.6" fill="#8c1b22"/><path d="M1.8 4.2 H12.2 V13.8 Q12.2 14.6 11.4 14.6 H2.6 Q1.8 14.6 1.8 13.8Z" fill="#8c1b22"/><path d="M4.6 5.6 V12.6 M7 5.6 V12.6 M9.4 5.6 V12.6" stroke="#777" stroke-width="0.9"/></svg>
<div class="t" style="left:388px;top:544.00px;font-size:17.05px;color:#282828;font-weight:normal;">100004492</div>
<svg style="left:1613px;top:544.7px;" width="18" height="15" viewBox="0 0 18 15"><path d="M8.5 1.2 H3.2 Q1 1.2 1 3.4 V11.6 Q1 13.8 3.2 13.8 H11.3 Q13.5 13.8 13.5 11.6 V8.5" fill="none" stroke="#0d3f8f" stroke-width="1.6"/><path d="M6.6 9.8 L14.5 1.9" stroke="#0d3f8f" stroke-width="3.2"/><path d="M15.5 0.9 L16.6 2" stroke="#0d3f8f" stroke-width="2.6" stroke-linecap="round"/><path d="M5.5 11 L6.2 9 L7.6 10.4Z" fill="#0d3f8f"/></svg>
<svg style="left:1641px;top:544.4000000000001px;" width="14" height="15" viewBox="0 0 14 15"><path d="M4 2.8 V1.2 Q4 0.3 5 0.3 H9 Q10 0.3 10 1.2 V2.8" fill="none" stroke="#8c1b22" stroke-width="1.6"/><rect x="0.2" y="2.6" width="13.6" height="1.6" fill="#8c1b22"/><path d="M1.8 4.2 H12.2 V13.8 Q12.2 14.6 11.4 14.6 H2.6 Q1.8 14.6 1.8 13.8Z" fill="#8c1b22"/><path d="M4.6 5.6 V12.6 M7 5.6 V12.6 M9.4 5.6 V12.6" stroke="#777" stroke-width="0.9"/></svg>
<div class="t" style="left:388px;top:597.00px;font-size:17.05px;color:#282828;font-weight:normal;">100004491</div>
<svg style="left:1613px;top:597.1px;" width="18" height="15" viewBox="0 0 18 15"><path d="M8.5 1.2 H3.2 Q1 1.2 1 3.4 V11.6 Q1 13.8 3.2 13.8 H11.3 Q13.5 13.8 13.5 11.6 V8.5" fill="none" stroke="#0d3f8f" stroke-width="1.6"/><path d="M6.6 9.8 L14.5 1.9" stroke="#0d3f8f" stroke-width="3.2"/><path d="M15.5 0.9 L16.6 2" stroke="#0d3f8f" stroke-width="2.6" stroke-linecap="round"/><path d="M5.5 11 L6.2 9 L7.6 10.4Z" fill="#0d3f8f"/></svg>
<svg style="left:1641px;top:596.8000000000001px;" width="14" height="15" viewBox="0 0 14 15"><path d="M4 2.8 V1.2 Q4 0.3 5 0.3 H9 Q10 0.3 10 1.2 V2.8" fill="none" stroke="#8c1b22" stroke-width="1.6"/><rect x="0.2" y="2.6" width="13.6" height="1.6" fill="#8c1b22"/><path d="M1.8 4.2 H12.2 V13.8 Q12.2 14.6 11.4 14.6 H2.6 Q1.8 14.6 1.8 13.8Z" fill="#8c1b22"/><path d="M4.6 5.6 V12.6 M7 5.6 V12.6 M9.4 5.6 V12.6" stroke="#777" stroke-width="0.9"/></svg>
<div class="t" style="left:388px;top:649.00px;font-size:17.05px;color:#282828;font-weight:normal;">100004490</div>
<svg style="left:1613px;top:649.5px;" width="18" height="15" viewBox="0 0 18 15"><path d="M8.5 1.2 H3.2 Q1 1.2 1 3.4 V11.6 Q1 13.8 3.2 13.8 H11.3 Q13.5 13.8 13.5 11.6 V8.5" fill="none" stroke="#0d3f8f" stroke-width="1.6"/><path d="M6.6 9.8 L14.5 1.9" stroke="#0d3f8f" stroke-width="3.2"/><path d="M15.5 0.9 L16.6 2" stroke="#0d3f8f" stroke-width="2.6" stroke-linecap="round"/><path d="M5.5 11 L6.2 9 L7.6 10.4Z" fill="#0d3f8f"/></svg>
<svg style="left:1641px;top:649.2px;" width="14" height="15" viewBox="0 0 14 15"><path d="M4 2.8 V1.2 Q4 0.3 5 0.3 H9 Q10 0.3 10 1.2 V2.8" fill="none" stroke="#8c1b22" stroke-width="1.6"/><rect x="0.2" y="2.6" width="13.6" height="1.6" fill="#8c1b22"/><path d="M1.8 4.2 H12.2 V13.8 Q12.2 14.6 11.4 14.6 H2.6 Q1.8 14.6 1.8 13.8Z" fill="#8c1b22"/><path d="M4.6 5.6 V12.6 M7 5.6 V12.6 M9.4 5.6 V12.6" stroke="#777" stroke-width="0.9"/></svg>
<div class="t" style="left:388px;top:701.00px;font-size:17.05px;color:#282828;font-weight:normal;">100004489</div>
<svg style="left:1613px;top:701.9px;" width="18" height="15" viewBox="0 0 18 15"><path d="M8.5 1.2 H3.2 Q1 1.2 1 3.4 V11.6 Q1 13.8 3.2 13.8 H11.3 Q13.5 13.8 13.5 11.6 V8.5" fill="none" stroke="#0d3f8f" stroke-width="1.6"/><path d="M6.6 9.8 L14.5 1.9" stroke="#0d3f8f" stroke-width="3.2"/><path d="M15.5 0.9 L16.6 2" stroke="#0d3f8f" stroke-width="2.6" stroke-linecap="round"/><path d="M5.5 11 L6.2 9 L7.6 10.4Z" fill="#0d3f8f"/></svg>
<svg style="left:1641px;top:701.6px;" width="14" height="15" viewBox="0 0 14 15"><path d="M4 2.8 V1.2 Q4 0.3 5 0.3 H9 Q10 0.3 10 1.2 V2.8" fill="none" stroke="#8c1b22" stroke-width="1.6"/><rect x="0.2" y="2.6" width="13.6" height="1.6" fill="#8c1b22"/><path d="M1.8 4.2 H12.2 V13.8 Q12.2 14.6 11.4 14.6 H2.6 Q1.8 14.6 1.8 13.8Z" fill="#8c1b22"/><path d="M4.6 5.6 V12.6 M7 5.6 V12.6 M9.4 5.6 V12.6" stroke="#777" stroke-width="0.9"/></svg>
<div class="t" style="left:388px;top:754.00px;font-size:17.05px;color:#282828;font-weight:normal;">100004488</div>
<svg style="left:1613px;top:754.3px;" width="18" height="15" viewBox="0 0 18 15"><path d="M8.5 1.2 H3.2 Q1 1.2 1 3.4 V11.6 Q1 13.8 3.2 13.8 H11.3 Q13.5 13.8 13.5 11.6 V8.5" fill="none" stroke="#0d3f8f" stroke-width="1.6"/><path d="M6.6 9.8 L14.5 1.9" stroke="#0d3f8f" stroke-width="3.2"/><path d="M15.5 0.9 L16.6 2" stroke="#0d3f8f" stroke-width="2.6" stroke-linecap="round"/><path d="M5.5 11 L6.2 9 L7.6 10.4Z" fill="#0d3f8f"/></svg>
<svg style="left:1641px;top:754.0px;" width="14" height="15" viewBox="0 0 14 15"><path d="M4 2.8 V1.2 Q4 0.3 5 0.3 H9 Q10 0.3 10 1.2 V2.8" fill="none" stroke="#8c1b22" stroke-width="1.6"/><rect x="0.2" y="2.6" width="13.6" height="1.6" fill="#8c1b22"/><path d="M1.8 4.2 H12.2 V13.8 Q12.2 14.6 11.4 14.6 H2.6 Q1.8 14.6 1.8 13.8Z" fill="#8c1b22"/><path d="M4.6 5.6 V12.6 M7 5.6 V12.6 M9.4 5.6 V12.6" stroke="#777" stroke-width="0.9"/></svg>
<div class="t" style="left:388px;top:806.00px;font-size:17.05px;color:#282828;font-weight:normal;">100004482</div>
<svg style="left:1613px;top:806.7px;" width="18" height="15" viewBox="0 0 18 15"><path d="M8.5 1.2 H3.2 Q1 1.2 1 3.4 V11.6 Q1 13.8 3.2 13.8 H11.3 Q13.5 13.8 13.5 11.6 V8.5" fill="none" stroke="#0d3f8f" stroke-width="1.6"/><path d="M6.6 9.8 L14.5 1.9" stroke="#0d3f8f" stroke-width="3.2"/><path d="M15.5 0.9 L16.6 2" stroke="#0d3f8f" stroke-width="2.6" stroke-linecap="round"/><path d="M5.5 11 L6.2 9 L7.6 10.4Z" fill="#0d3f8f"/></svg>
<svg style="left:1641px;top:806.4000000000001px;" width="14" height="15" viewBox="0 0 14 15"><path d="M4 2.8 V1.2 Q4 0.3 5 0.3 H9 Q10 0.3 10 1.2 V2.8" fill="none" stroke="#8c1b22" stroke-width="1.6"/><rect x="0.2" y="2.6" width="13.6" height="1.6" fill="#8c1b22"/><path d="M1.8 4.2 H12.2 V13.8 Q12.2 14.6 11.4 14.6 H2.6 Q1.8 14.6 1.8 13.8Z" fill="#8c1b22"/><path d="M4.6 5.6 V12.6 M7 5.6 V12.6 M9.4 5.6 V12.6" stroke="#777" stroke-width="0.9"/></svg>
<div class="t" style="left:388px;top:859.00px;font-size:17.05px;color:#282828;font-weight:normal;">100004481</div>
<svg style="left:1613px;top:859.1px;" width="18" height="15" viewBox="0 0 18 15"><path d="M8.5 1.2 H3.2 Q1 1.2 1 3.4 V11.6 Q1 13.8 3.2 13.8 H11.3 Q13.5 13.8 13.5 11.6 V8.5" fill="none" stroke="#0d3f8f" stroke-width="1.6"/><path d="M6.6 9.8 L14.5 1.9" stroke="#0d3f8f" stroke-width="3.2"/><path d="M15.5 0.9 L16.6 2" stroke="#0d3f8f" stroke-width="2.6" stroke-linecap="round"/><path d="M5.5 11 L6.2 9 L7.6 10.4Z" fill="#0d3f8f"/></svg>
<svg style="left:1641px;top:858.8000000000001px;" width="14" height="15" viewBox="0 0 14 15"><path d="M4 2.8 V1.2 Q4 0.3 5 0.3 H9 Q10 0.3 10 1.2 V2.8" fill="none" stroke="#8c1b22" stroke-width="1.6"/><rect x="0.2" y="2.6" width="13.6" height="1.6" fill="#8c1b22"/><path d="M1.8 4.2 H12.2 V13.8 Q12.2 14.6 11.4 14.6 H2.6 Q1.8 14.6 1.8 13.8Z" fill="#8c1b22"/><path d="M4.6 5.6 V12.6 M7 5.6 V12.6 M9.4 5.6 V12.6" stroke="#777" stroke-width="0.9"/></svg>
<div class="t" style="left:388px;top:911.00px;font-size:17.05px;color:#282828;font-weight:normal;">100004480</div>
<svg style="left:1613px;top:911.5px;" width="18" height="15" viewBox="0 0 18 15"><path d="M8.5 1.2 H3.2 Q1 1.2 1 3.4 V11.6 Q1 13.8 3.2 13.8 H11.3 Q13.5 13.8 13.5 11.6 V8.5" fill="none" stroke="#0d3f8f" stroke-width="1.6"/><path d="M6.6 9.8 L14.5 1.9" stroke="#0d3f8f" stroke-width="3.2"/><path d="M15.5 0.9 L16.6 2" stroke="#0d3f8f" stroke-width="2.6" stroke-linecap="round"/><path d="M5.5 11 L6.2 9 L7.6 10.4Z" fill="#0d3f8f"/></svg>
<svg style="left:1641px;top:911.2px;" width="14" height="15" viewBox="0 0 14 15"><path d="M4 2.8 V1.2 Q4 0.3 5 0.3 H9 Q10 0.3 10 1.2 V2.8" fill="none" stroke="#8c1b22" stroke-width="1.6"/><rect x="0.2" y="2.6" width="13.6" height="1.6" fill="#8c1b22"/><path d="M1.8 4.2 H12.2 V13.8 Q12.2 14.6 11.4 14.6 H2.6 Q1.8 14.6 1.8 13.8Z" fill="#8c1b22"/><path d="M4.6 5.6 V12.6 M7 5.6 V12.6 M9.4 5.6 V12.6" stroke="#777" stroke-width="0.9"/></svg>
<div class="t" style="left:388px;top:963.00px;font-size:17.05px;color:#282828;font-weight:normal;">100004477</div>
<svg style="left:1613px;top:963.9px;" width="18" height="15" viewBox="0 0 18 15"><path d="M8.5 1.2 H3.2 Q1 1.2 1 3.4 V11.6 Q1 13.8 3.2 13.8 H11.3 Q13.5 13.8 13.5 11.6 V8.5" fill="none" stroke="#0d3f8f" stroke-width="1.6"/><path d="M6.6 9.8 L14.5 1.9" stroke="#0d3f8f" stroke-width="3.2"/><path d="M15.5 0.9 L16.6 2" stroke="#0d3f8f" stroke-width="2.6" stroke-linecap="round"/><path d="M5.5 11 L6.2 9 L7.6 10.4Z" fill="#0d3f8f"/></svg>
<svg style="left:1641px;top:963.6px;" width="14" height="15" viewBox="0 0 14 15"><path d="M4 2.8 V1.2 Q4 0.3 5 0.3 H9 Q10 0.3 10 1.2 V2.8" fill="none" stroke="#8c1b22" stroke-width="1.6"/><rect x="0.2" y="2.6" width="13.6" height="1.6" fill="#8c1b22"/><path d="M1.8 4.2 H12.2 V13.8 Q12.2 14.6 11.4 14.6 H2.6 Q1.8 14.6 1.8 13.8Z" fill="#8c1b22"/><path d="M4.6 5.6 V12.6 M7 5.6 V12.6 M9.4 5.6 V12.6" stroke="#777" stroke-width="0.9"/></svg>
<div class="t" style="left:1443.6px;top:492.00px;font-size:17.06px;color:#282828;font-weight:normal;">22:54:00</div>
<div class="t" style="left:1443.6px;top:544.00px;font-size:17.06px;color:#282828;font-weight:normal;">22:54:00</div>
<div class="t" style="left:614.2px;top:860.00px;font-size:16.87px;color:#282828;font-weight:normal;">ext department</div>
<div class="t" style="left:911.7px;top:859.00px;font-size:17.05px;color:#282828;font-weight:normal;">AL</div>
<div class="t" style="left:1152px;top:859.00px;font-size:17.05px;color:#282828;font-weight:normal;">Wednesday</div>
<div class="t" style="left:1364px;top:859.00px;font-size:17.05px;color:#282828;font-weight:normal;">Full Day</div>
<div class="t" style="left:614.2px;top:912.00px;font-size:16.87px;color:#282828;font-weight:normal;">bug myy</div>
<div class="t" style="left:911.7px;top:911.00px;font-size:17.05px;color:#282828;font-weight:normal;">AL</div>
<div class="t" style="left:1152px;top:911.00px;font-size:17.05px;color:#282828;font-weight:normal;">Wednesday</div>
<div class="t" style="left:1364px;top:911.00px;font-size:17.05px;color:#282828;font-weight:normal;">Full Day</div>
<div class="t" style="left:614.2px;top:964.00px;font-size:16.87px;color:#282828;font-weight:normal;">happpyyy happpyyy</div>
<div class="t" style="left:911.7px;top:963.00px;font-size:17.05px;color:#282828;font-weight:normal;">AL</div>
<div class="t" style="left:1152px;top:963.00px;font-size:17.05px;color:#282828;font-weight:normal;">Wednesday</div>
<div class="t" style="left:1364px;top:963.00px;font-size:17.05px;color:#282828;font-weight:normal;">Full Day</div>
<div class="a" style="left:480px;top:399px;width:960px;height:428px;background:#fff;border-radius:6px"></div>
<div class="t" style="left:500px;top:428.00px;font-size:19.0px;color:#53585f;font-weight:normal;">Edit Restriction</div>
<div class="a" style="left:1374px;top:419px;width:47px;height:38px;background:#f25664;border-radius:4px"></div>
<svg style="left:1390.5px;top:431.5px;" width="14" height="12" viewBox="0 0 14 12"><rect x="0.3" y="0.3" width="13.4" height="11.4" rx="1.2" fill="#fff"/><path d="M4.6 3.6 L9.4 8.4 M9.4 3.6 L4.6 8.4" stroke="#f25664" stroke-width="1.5"/></svg>
<div class="a" style="left:480px;top:476px;width:960px;height:1px;background:#e6eaee;"></div>
<div class="t" style="left:500px;top:501.00px;font-size:16.2px;color:#474c52;font-weight:normal;">State</div>
<svg style="left:542.5px;top:503px;" width="8" height="8" viewBox="0 0 8 8"><path d="M4 0 V8 M0.5 2 L7.5 6 M7.5 2 L0.5 6" stroke="#e8364a" stroke-width="1.3"/></svg>
<div class="a" style="left:499px;top:521px;width:443px;height:57px;background:#fff;border:1px solid #c6c6cc;border-radius:4px"></div>
<div class="a" style="left:515px;top:531px;width:86px;height:31px;background:#337ab7;border-radius:3px"></div>
<div class="t" style="left:517px;top:539.00px;font-size:16.25px;color:#fff;font-weight:bold;">Alabama x</div>
<svg style="left:908px;top:539px;" width="18" height="9" viewBox="0 0 18 9"><path d="M0 0 H17.6 L8.8 9Z" fill="#888"/></svg>
<div class="t" style="left:978.5px;top:502.00px;font-size:15.4px;color:#474c52;font-weight:normal;">SAN</div>
<svg style="left:1014.8px;top:503px;" width="8" height="8" viewBox="0 0 8 8"><path d="M4 0 V8 M0.5 2 L7.5 6 M7.5 2 L0.5 6" stroke="#e8364a" stroke-width="1.3"/></svg>
<div class="a" style="left:978px;top:521px;width:443px;height:57px;background:#fff;border:1px solid #dcdcdc;border-radius:4px"></div>
<div class="a" style="left:993px;top:531px;width:194px;height:31px;background:#84add6;border-radius:3px"></div>
<div class="t" style="left:995px;top:539.00px;font-size:16.43px;color:#fff;font-weight:bold;">Kusum Jha-100004492 x</div>
<svg style="left:1387px;top:538.6px;" width="18" height="9" viewBox="0 0 18 9"><path d="M0 0 H17.6 L8.8 9Z" fill="#c0c0c0"/></svg>
<div class="t" style="left:500px;top:593.00px;font-size:15.3px;color:#474c52;font-weight:normal;">Day</div>
<svg style="left:531.5px;top:595px;" width="8" height="8" viewBox="0 0 8 8"><path d="M4 0 V8 M0.5 2 L7.5 6 M7.5 2 L0.5 6" stroke="#e8364a" stroke-width="1.3"/></svg>
<div class="a" style="left:499px;top:612px;width:443px;height:57px;background:#fff;border:1px solid #c6c6cc;border-radius:4px"></div>
<div class="a" style="left:515px;top:622px;width:105px;height:31.5px;background:#337ab7;border-radius:3px"></div>
<div class="t" style="left:517px;top:630.00px;font-size:16.16px;color:#fff;font-weight:bold;">Wednesday x</div>
<svg style="left:908px;top:630px;" width="18" height="9" viewBox="0 0 18 9"><path d="M0 0 H17.6 L8.8 9Z" fill="#888"/></svg>
<div class="a" style="left:974px;top:628px;width:14px;height:14px;border:1.5px solid #1a73e8;border-radius:50%;background:#fff"></div>
<div class="a" style="left:977.2px;top:631.2px;width:7.6px;height:7.6px;background:#1a73e8;border-radius:50%"></div>
<div class="t" style="left:994px;top:630.00px;font-size:15.84px;color:#474c52;font-weight:normal;">Full Day</div>
<div class="a" style="left:1091px;top:628px;width:14px;height:14px;border:1px solid #666;border-radius:50%;background:#fff"></div>
<div class="t" style="left:1111.7px;top:630.00px;font-size:16.62px;color:#474c52;font-weight:normal;">Timerange</div>
<div class="t" style="left:500px;top:678.00px;font-size:16.5px;color:#474c52;font-weight:normal;">Holiday</div>
<div class="a" style="left:499px;top:698px;width:443px;height:47px;background:#fff;border:1px solid #c6c6cc;border-radius:4px"></div>
<div class="t" style="left:515px;top:714.00px;font-size:16.54px;color:#4d5258;font-weight:normal;">Select Holiday</div>
<svg style="left:908px;top:717px;" width="18" height="9" viewBox="0 0 18 9"><path d="M0 0 H17.6 L8.8 9Z" fill="#888"/></svg>
<div class="a" style="left:884px;top:760px;width:76px;height:38px;background:#1a73e8;border-radius:4px"></div>
<div class="t" style="left:901px;top:773.00px;font-size:12.39px;color:#fff;font-weight:bold;">Update</div>
<div class="a" style="left:969px;top:760px;width:67px;height:38px;background:#f25664;border-radius:4px"></div>
<div class="t" style="left:986px;top:773.00px;font-size:12.08px;color:#fff;font-weight:bold;">Reset</div>
<div class="a" style="left:0px;top:1008px;width:1920px;height:72px;background:linear-gradient(90deg,#1f2a1b 0%,#1e2a1c 9%,#1a2926 13%,#152530 18%,#162530 22%,#1b2a24 26%,#1f2a1a 29%,#1f2a18 50%,#1f2a17 72%,#1c2a22 80%,#19262c 86%,#1a262a 100%);"></div>
<div class="a" style="left:0px;top:1008px;width:1920px;height:2px;background:#3b4139;"></div>
<svg style="left:28px;top:1024px;" width="40" height="40" viewBox="0 0 40 40"><defs><linearGradient id="sun" x1="0" y1="0" x2="1" y2="1"><stop offset="0" stop-color="#fbc02d"/><stop offset="1" stop-color="#f57c00"/></linearGradient>
<linearGradient id="cld" x1="0" y1="0" x2="0" y2="1"><stop offset="0" stop-color="#d6e6fa"/><stop offset="1" stop-color="#8fb4e8"/></linearGradient></defs>
<circle cx="19" cy="19" r="15" fill="url(#sun)"/>
<path d="M11 37 Q7 37 7 33 Q7 29.5 10.5 28.5 Q11.5 19 19.5 18.5 Q26 18.5 28 24.5 Q30 23.5 32 24 Q37 25.5 37 31 Q37 37 32 37Z" fill="url(#cld)"/></svg>
<div class="a" style="left:46px;top:1018px;width:23px;height:23px;background:#c42b1c;border-radius:50%"></div>
<div class="t" style="left:52px;top:1021.00px;font-size:16px;color:#fff;font-weight:normal;">3</div>
<div class="t" style="left:76.25px;top:1024.00px;font-size:16.45px;color:#ffffff;font-weight:normal;">26°C</div>
<div class="t" style="left:76.5px;top:1048.00px;font-size:17.6px;color:#dcdcdc;font-weight:normal;">Partly sunny</div>
<svg style="left:543px;top:1027px;" width="36" height="36" viewBox="0 0 36 36"><defs><linearGradient id="win" x1="0" y1="0" x2="1" y2="1"><stop offset="0" stop-color="#7dd8fb"/><stop offset="1" stop-color="#0b8ef0"/></linearGradient></defs>
<rect x="0" y="0" width="16.8" height="16.8" rx="1.5" fill="url(#win)"/><rect x="18.7" y="0" width="16.8" height="16.8" rx="1.5" fill="url(#win)"/>
<rect x="0" y="18.7" width="16.8" height="16.8" rx="1.5" fill="url(#win)"/><rect x="18.7" y="18.7" width="16.8" height="16.8" rx="1.5" fill="url(#win)"/></svg>
<div class="a" style="left:600px;top:1022px;width:326px;height:44px;background:#f3f3f1;border-radius:22px"></div>
<svg style="left:615px;top:1033px;" width="24" height="24" viewBox="0 0 24 24"><circle cx="9.5" cy="9.5" r="7.6" fill="none" stroke="#1e1e1e" stroke-width="2.2"/><path d="M15 15 L21.5 21.5" stroke="#1e1e1e" stroke-width="2.4" stroke-linecap="round"/></svg>
<div class="t" style="left:654.5px;top:1037.00px;font-size:18.9px;color:#5e5e5e;font-weight:normal;">Search</div>
<svg style="left:856px;top:1027px;" width="56" height="38" viewBox="0 0 56 38"><defs><linearGradient id="fth" x1="0" y1="1" x2="1" y2="0"><stop offset="0" stop-color="#5a9ad8"/><stop offset="1" stop-color="#b0c8f0"/></linearGradient></defs>
<path d="M4.5 28 Q5 18 11 10 Q16 3 23.5 0.5 Q22 8 17 15 Q11 24 4.5 28Z" fill="url(#fth)"/><path d="M5 27 Q12 14 22 2" stroke="#f0e0c0" stroke-width="0.7" fill="none"/><path d="M2 34 L5.5 26.5" stroke="#7b3fb8" stroke-width="2.6"/>
<rect x="20.2" y="13.5" width="3.8" height="23.1" rx="0.8" fill="#3a78e0"/>
<rect x="24.2" y="7.9" width="7.7" height="28.7" rx="0.8" fill="#d8509a"/><rect x="24.2" y="10.5" width="7.7" height="1.5" fill="#f0c848"/><rect x="24.2" y="30" width="7.7" height="3" fill="#f0c848"/><rect x="26.8" y="13" width="2.5" height="15" rx="1.2" fill="#eba8d0"/>
<rect x="32.1" y="5.1" width="8.2" height="31.5" rx="0.8" fill="#9a70ec"/><path d="M32.1 5.1 H40.3 V14 L36.2 18 L32.1 14Z" fill="#f0c030"/><rect x="34.2" y="19.5" width="4" height="10" rx="2" fill="#8050d0"/>
<rect x="40.5" y="7.9" width="6.4" height="28.7" rx="0.8" fill="#d07038"/><rect x="40.5" y="10" width="6.4" height="3" fill="#f0c070"/><rect x="40.5" y="32" width="6.4" height="1.5" fill="#f0c070"/>
<rect x="47.2" y="5.1" width="7.9" height="31.5" rx="0.8" fill="#3a9a5a"/><rect x="47.2" y="8" width="7.9" height="1.5" fill="#e8b848"/><rect x="47.2" y="30.5" width="7.9" height="2.5" fill="#e8c060"/></svg>
<svg style="left:946px;top:1027px;" width="37" height="34" viewBox="0 0 37 34"><rect x="10" y="0" width="26" height="24" rx="3" fill="#f0f0f0"/><rect x="0" y="9" width="26" height="24" rx="3" fill="#6a6a6a"/><rect x="10" y="9" width="16" height="15" fill="#bdbdbd"/></svg>
<svg style="left:1005px;top:1020px;" width="50" height="48" viewBox="0 0 50 48"><defs><linearGradient id="cp1" x1="0" y1="0" x2="0" y2="1"><stop offset="0" stop-color="#18a8f5"/><stop offset="0.5" stop-color="#40b070"/><stop offset="1" stop-color="#f7d200"/></linearGradient>
<linearGradient id="cp2" x1="0" y1="0" x2="0" y2="1"><stop offset="0" stop-color="#b050e8"/><stop offset="0.55" stop-color="#f05088"/><stop offset="1" stop-color="#f8b060"/></linearGradient></defs>
<path d="M26 9 H31 Q33.5 9 34.3 11.5 L36 17.5 H28.5Z" fill="#1848d8"/>
<path d="M16 30.5 H21.5 L24 39 H21 Q18 39 17 36Z" fill="#f05a28"/>
<path d="M16.5 9 H27.5 L21 31 H11 Q8.5 31 9.2 28.3 L13.5 11.5 Q14.2 9 16.5 9Z" fill="url(#cp1)"/>
<path d="M29.3 17 H39 Q41.6 17 40.9 19.6 L36.3 36.5 Q35.6 39 33 39 H23Z" fill="url(#cp2)"/></svg>
<svg style="left:1077px;top:1028px;" width="37" height="33" viewBox="0 0 37 33"><path d="M0 3 Q0 0 3 0 H12 L16 4 H34 Q37 4 37 7 V30 Q37 33 34 33 H3 Q0 33 0 30Z" fill="#f0b429"/>
<rect x="0" y="7" width="37" height="26" rx="2" fill="#fcd462"/><rect x="7" y="22" width="23" height="11" rx="2" fill="#1f7fd8"/><rect x="12" y="25" width="13" height="2" fill="#0b4f9a"/></svg>
<svg style="left:1138px;top:1020px;" width="50" height="48" viewBox="0 0 50 48"><defs><linearGradient id="tb" x1="0" y1="0" x2="0" y2="1"><stop offset="0" stop-color="#1e8cf0"/><stop offset="1" stop-color="#0f62c8"/></linearGradient></defs>
<path d="M24 42 Q6.5 42 6.2 24 Q6.3 17 9 12 Q10 17 12 19 Q12.5 12 13.5 10.5 Q15.5 14 17.5 15.5 Q20 8.5 28 7.3 Q35 6.8 40.5 9.5 Q38.5 10.5 39 12 Q42 17 41.8 24 Q41.5 42 24 42Z" fill="url(#tb)"/>
<ellipse cx="24" cy="25.2" rx="8.8" ry="8.5" fill="#dfeefc"/><path d="M16 22.5 L24 27 L32 22.5" fill="none" stroke="#a8cdf0" stroke-width="1.3"/><circle cx="24.5" cy="12.5" r="1" fill="#e8f0ff"/></svg>
<div class="a" style="left:1198px;top:1014px;width:60px;height:60px;background:#2d3424;border-radius:6px;border:1px solid #363c2c"></div>
<svg style="left:1210px;top:1026px;" width="36" height="36" viewBox="0 0 36 36"><circle cx="18" cy="18" r="18" fill="#db4437"/>
<path d="M18 18 L2.4 9 A18 18 0 0 0 9 33.6Z" fill="#0f9d58"/>
<path d="M18 18 L9 33.6 A18 18 0 0 0 36 18 L33.6 9Z" fill="#f4b400"/>
<path d="M18 18 L33.6 9 L18 9Z" fill="#f4b400"/>
<path d="M18 18 L2.4 9 L18 9Z" fill="#db4437"/>
<circle cx="18" cy="18" r="8.3" fill="#fff"/><circle cx="18" cy="18" r="6.6" fill="#4285f4"/></svg>
<div class="a" style="left:1216px;top:1068px;width:24px;height:5px;background:#4cc2ff;border-radius:2.5px"></div>
<svg style="left:1275px;top:1019px;" width="50" height="43" viewBox="0 0 50 43"><defs><linearGradient id="tm" x1="0" y1="0" x2="1" y2="1"><stop offset="0" stop-color="#9aa0f8"/><stop offset="1" stop-color="#5b5fd8"/></linearGradient>
<linearGradient id="tm2" x1="0" y1="0" x2="1" y2="1"><stop offset="0" stop-color="#5a52e0"/><stop offset="1" stop-color="#a078f8"/></linearGradient>
<linearGradient id="tmt" x1="0" y1="0" x2="1" y2="1"><stop offset="0" stop-color="#6870f0"/><stop offset="1" stop-color="#3a2aa8"/></linearGradient></defs>
<circle cx="12.8" cy="12.2" r="5" fill="#a89cf4"/>
<path d="M21 26 H30.5 Q33.8 26 33.8 29.5 V35 Q33.8 40.6 28 40.6 H24 Q21 40.6 21 37Z" fill="url(#tm2)"/>
<path d="M8 18.7 H19 Q22.5 18.7 22.5 22 V40.6 H12 Q4.8 40.6 4.8 33 V22 Q4.8 18.7 8 18.7Z" fill="url(#tm)"/>
<rect x="0.8" y="22.9" width="14.9" height="15.1" rx="3" fill="url(#tmt)"/><path d="M4.5 27 H12 M8.25 27 V35.5" stroke="#fff" stroke-width="2.4"/></svg>
<div class="a" style="left:1292px;top:1019px;width:31px;height:24px;background:#4cc2ff;border-radius:12px"></div>
<div class="t" style="left:1299px;top:1024.00px;font-size:15.8px;color:#000;font-weight:normal;">46</div>
<div class="a" style="left:1290px;top:1068px;width:9px;height:5px;background:#9a9c90;border-radius:2.5px"></div>
<svg style="left:1346px;top:1026px;" width="28" height="36" viewBox="0 0 28 36"><defs><linearGradient id="np" x1="0" y1="0" x2="0" y2="1"><stop offset="0" stop-color="#7fd0ec"/><stop offset="1" stop-color="#3aa6d0"/></linearGradient></defs>
<rect x="0" y="3" width="28" height="30" rx="2" fill="url(#np)"/><rect x="0" y="29" width="28" height="4" fill="#f2f2f2"/><rect x="0" y="32" width="28" height="4" rx="1" fill="#c8641e"/>
<path d="M4 0 L5.5 3 L4 6 L2.5 3Z M10.5 0 L12 3 L10.5 6 L9 3Z M17 0 L18.5 3 L17 6 L15.5 3Z M23.5 0 L25 3 L23.5 6 L22 3Z" fill="#1c6f9a"/>
<path d="M6 12.5 H22 M6 17.5 H22 M6 22.5 H22" stroke="#1c6f9a" stroke-width="1.8"/></svg>
<div class="a" style="left:1356px;top:1068px;width:9px;height:5px;background:#9a9c90;border-radius:2.5px"></div>
<svg style="left:1537px;top:1039px;" width="17" height="9" viewBox="0 0 17 9"><path d="M1 8 L8.5 1 L16 8" fill="none" stroke="#fff" stroke-width="1.6"/></svg>
<svg style="left:1581px;top:1031px;" width="25" height="26" viewBox="0 0 25 26"><path d="M20 7 A9.5 9.5 0 0 0 3 10" fill="none" stroke="#fff" stroke-width="1.3"/><path d="M20.5 2 V7.5 H15" fill="none" stroke="#fff" stroke-width="1.3"/><path d="M4 18 A9.5 9.5 0 0 0 13 24" fill="none" stroke="#fff" stroke-width="1.3"/><path d="M3.5 24 V18.5 H9" fill="none" stroke="#fff" stroke-width="1.3"/><circle cx="18" cy="19" r="6" fill="#f7a21b"/></svg>
<svg style="left:1632px;top:1032px;" width="18" height="24" viewBox="0 0 18 24"><rect x="5" y="0.8" width="8" height="14" rx="4" fill="none" stroke="#7fd4f0" stroke-width="1.6"/><path d="M1.5 10 Q1.5 18 9 18 Q16.5 18 16.5 10 M9 18 V23.5" fill="none" stroke="#7fd4f0" stroke-width="1.6"/></svg>
<svg style="left:1677px;top:1035px;" width="24" height="18" viewBox="0 0 24 18"><path d="M1 6 Q12 -3 23 6 M4.5 9.5 Q12 3 19.5 9.5 M8 13 Q12 9.5 16 13" fill="none" stroke="#fff" stroke-width="1.6"/><circle cx="12" cy="15.5" r="1.8" fill="#fff"/></svg>
<svg style="left:1712px;top:1034px;" width="26" height="20" viewBox="0 0 26 20"><path d="M1 6.5 H5.5 L11 1.5 V18.5 L5.5 13.5 H1Z" fill="none" stroke="#fff" stroke-width="1.4" stroke-linejoin="round"/><path d="M15 6 Q17.5 10 15 14 M18.5 3.5 Q22.5 10 18.5 16.5 M22 1 Q27 10 22 19" fill="none" stroke="#fff" stroke-width="1.4"/></svg>
<svg style="left:1749px;top:1036px;" width="25" height="16" viewBox="0 0 25 16"><rect x="0.8" y="0.8" width="20.5" height="14" rx="3" fill="none" stroke="#fff" stroke-width="1.5"/><rect x="3.5" y="3.5" width="9" height="8.5" rx="1" fill="#fff"/><path d="M22.5 5 Q24.5 5 24.5 7 V9 Q24.5 11 22.5 11Z" fill="#fff"/></svg>
<div class="t" style="left:1815px;top:1024.00px;font-size:17.95px;color:#fff;font-weight:normal;">11:07 AM</div>
<div class="t" style="left:1798.6px;top:1047.00px;font-size:18.6px;color:#fff;font-weight:normal;">11/20/2025</div>
</body></html>
